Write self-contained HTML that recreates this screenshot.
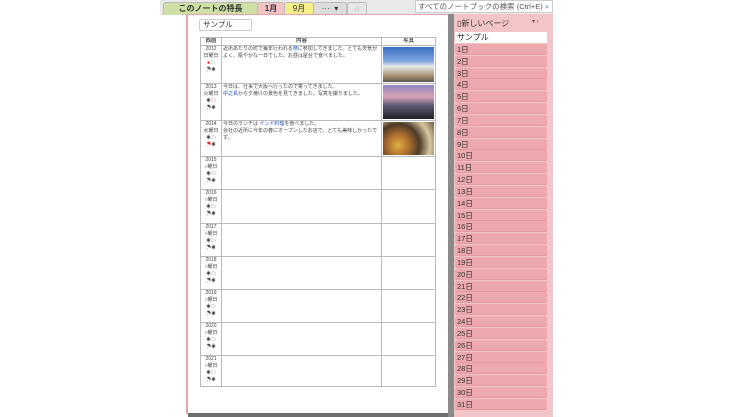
<!DOCTYPE html><html><head><meta charset="utf-8"><style>
body{margin:0;width:740px;height:417px;background:#fff;position:relative;overflow:hidden;font-family:"Liberation Sans","Noto Sans CJK JP",sans-serif}
.a{position:absolute}
.tab{position:absolute;top:2px;height:12px;font-size:8px;line-height:12px;text-align:center;color:#333;border:1px solid #bbb;border-bottom:none;border-radius:3px 3px 0 0}
.r{position:absolute;left:455px;width:92px;height:11px;background:#eda9ad;border-bottom:1px solid #e49aa0;font-size:7.5px;line-height:11px;color:#333;padding-left:2px;box-sizing:border-box;border-radius:2px}
table{border-collapse:collapse;position:absolute;left:200px;top:37px;width:235px;font-size:5px;color:#444;table-layout:fixed}
td,th{border:1px solid #bbb;vertical-align:top;padding:0 1px;overflow:hidden}
th{height:7px;font-size:5.5px;line-height:7px;padding:0;background:#fff}
.d{text-align:center;font-size:5px;line-height:7px}
.ph{padding:0}
</style></head><body>
<div class="a" style="left:160px;top:0;width:393px;height:15px;background:#e9e9e9"></div>
<div class="tab" style="left:163px;width:93px;background:#cfe0a6;font-weight:bold">このノートの特長</div>
<div class="tab" style="left:257px;width:26px;background:#f4c3c5;font-weight:bold">1月</div>
<div class="tab" style="left:284px;width:28px;background:#f4ef8c">9月</div>
<div class="tab" style="left:313px;width:32px;background:#ddd">··· &nbsp;▾</div>
<div class="tab" style="left:347px;width:18px;background:#e6e6e6;color:#aaa">☼</div>
<div class="a" style="left:415px;top:0;width:138px;height:13px;background:#fff;border:1px solid #ccc;box-sizing:border-box;font-size:7.5px;line-height:11px;color:#555;padding-left:2px">すべてのノートブックの検索 (Ctrl+E) <span style="color:#2a6ab8">⌕</span> ▾</div>
<div class="a" style="left:186px;top:14px;width:264px;height:399px;background:#fff;border-left:2px solid #e6a4aa;border-top:1px solid #e6a4aa"></div>
<div class="a" style="left:188px;top:413px;width:262px;height:4px;background:#6e6e6e"></div>
<div class="a" style="left:448px;top:14px;width:6px;height:403px;background:#8a8a8a"></div>
<div class="a" style="left:454px;top:14px;width:99px;height:403px;background:#f3c5c8"></div>
<div class="a" style="left:457px;top:18px;font-size:8px;color:#333">▯新しいページ</div>
<div class="a" style="left:532px;top:18px;font-size:6px;color:#555">▾ ›</div>
<div class="a" style="left:455px;top:32px;width:92px;height:11px;background:#fff;font-size:8px;line-height:11px;padding-left:2px;box-sizing:border-box;color:#222">サンプル</div>
<div class="r" style="top:44px">1日</div><div class="r" style="top:56px">2日</div><div class="r" style="top:68px">3日</div><div class="r" style="top:79px">4日</div><div class="r" style="top:91px">5日</div><div class="r" style="top:103px">6日</div><div class="r" style="top:115px">7日</div><div class="r" style="top:127px">8日</div><div class="r" style="top:139px">9日</div><div class="r" style="top:150px">10日</div><div class="r" style="top:162px">11日</div><div class="r" style="top:174px">12日</div><div class="r" style="top:186px">13日</div><div class="r" style="top:198px">14日</div><div class="r" style="top:210px">15日</div><div class="r" style="top:221px">16日</div><div class="r" style="top:233px">17日</div><div class="r" style="top:245px">18日</div><div class="r" style="top:257px">19日</div><div class="r" style="top:269px">20日</div><div class="r" style="top:281px">21日</div><div class="r" style="top:292px">22日</div><div class="r" style="top:304px">23日</div><div class="r" style="top:316px">24日</div><div class="r" style="top:328px">25日</div><div class="r" style="top:340px">26日</div><div class="r" style="top:352px">27日</div><div class="r" style="top:363px">28日</div><div class="r" style="top:375px">29日</div><div class="r" style="top:387px">30日</div><div class="r" style="top:399px">31日</div>
<div class="a" style="left:199px;top:19px;width:53px;height:12px;border:1px solid #ccc;border-radius:2px;box-sizing:border-box;font-size:7.5px;line-height:10px;padding-left:3px;color:#333">サンプル</div>
<table>
<colgroup><col style="width:21px"><col style="width:160px"><col style="width:54px"></colgroup>
<tr><th>西暦</th><th>内容</th><th>写真</th></tr>
<tr style="height:38px"><td class="d">2012<br>日曜日<br><span style="color:#e00">●</span>☁<br>☂☀</td><td style="line-height:7px">近所あたりの町で毎年行われる<span style="color:#24c">祭</span>に参加してきました。とても天気がよく、賑やかな一日でした。お昼は屋台で食べました。</td><td class="ph"><div style="height:35px;margin:1px;background:linear-gradient(#3c6fc4 0,#7fa6e0 40%,#e8e8e8 55%,#a08a6a 85%,#555 100%)"></div></td></tr>
<tr style="height:37px"><td class="d">2013<br>火曜日<br>☀<span style="color:#e00">☁</span><br>☂☀</td><td style="line-height:7px">今日は、仕事で大阪へ行ったので寄ってきました。<br><span style="color:#24c">中之島</span>から夕焼けの景色を見てきました。写真を撮りました。</td><td class="ph"><div style="height:34px;margin:1px;background:linear-gradient(#8f86c4 0,#d9a1b3 35%,#5a5a78 60%,#222 100%)"></div></td></tr>
<tr style="height:36px"><td class="d">2014<br>水曜日<br>☀☁<br><span style="color:#e00">☂</span>☀</td><td style="line-height:7px">今日のランチは <span style="color:#24c">インド料理</span>を食べました。<br>会社の近所に今年の春にオープンしたお店で、とても美味しかったです。</td><td class="ph"><div style="height:33px;margin:1px;background:radial-gradient(circle at 30% 70%,#e0b040 0,#b07030 25%,#4a3a28 50%,#d8c8a0 75%,#6a5a40 100%)"></div></td></tr>
<tr style="height:33px"><td class="d">2015<br>○曜日<br>☀☁<br>☂☀</td><td></td><td></td></tr>
<tr style="height:34px"><td class="d">2016<br>○曜日<br>☀☁<br>☂☀</td><td></td><td></td></tr>
<tr style="height:33px"><td class="d">2017<br>○曜日<br>☀☁<br>☂☀</td><td></td><td></td></tr>
<tr style="height:33px"><td class="d">2018<br>○曜日<br>☀☁<br>☂☀</td><td></td><td></td></tr>
<tr style="height:33px"><td class="d">2019<br>○曜日<br>☀☁<br>☂☀</td><td></td><td></td></tr>
<tr style="height:33px"><td class="d">2020<br>○曜日<br>☀☁<br>☂☀</td><td></td><td></td></tr>
<tr style="height:31px"><td class="d">2021<br>○曜日<br>☀☁<br>☂☀</td><td></td><td></td></tr>
</table>
</body></html>
